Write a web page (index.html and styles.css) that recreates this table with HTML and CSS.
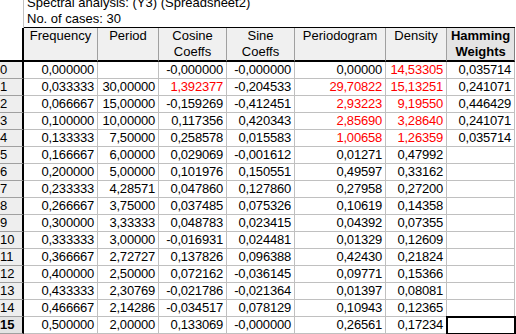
FILE: index.html
```html
<!DOCTYPE html>
<html lang="en">
<head>
    <meta charset="UTF-8">
    <title>Spectral analysis</title>
    <link rel="stylesheet" href="styles.css">
</head>
<body>
    <table class="sheet">
        <colgroup>
            <col class="c-row">
            <col class="c-freq">
            <col class="c-period">
            <col class="c-cos">
            <col class="c-sin">
            <col class="c-pgram">
            <col class="c-dens">
            <col class="c-ham">
        </colgroup>
        <tr class="title-row">
            <td class="corner"></td>
            <td class="title" colspan="7">Spectral analysis: (Y3) (Spreadsheet2)<br>No. of cases: 30</td>
        </tr>
        <tr class="head-row">
            <th class="corner"></th>
            <th>Frequency</th>
            <th>Period</th>
            <th>Cosine<br>Coeffs</th>
            <th>Sine<br>Coeffs</th>
            <th>Periodogram</th>
            <th>Density</th>
            <th class="active">Hamming<br>Weights</th>
        </tr>
        <tr><th class="rh">0</th><td>0,000000</td><td></td><td>-0,000000</td><td>-0,000000</td><td>0,00000</td><td class="red">14,53305</td><td>0,035714</td></tr>
        <tr><th class="rh">1</th><td>0,033333</td><td>30,00000</td><td class="red">1,392377</td><td>-0,204533</td><td class="red">29,70822</td><td class="red">15,13251</td><td>0,241071</td></tr>
        <tr><th class="rh">2</th><td>0,066667</td><td>15,00000</td><td>-0,159269</td><td>-0,412451</td><td class="red">2,93223</td><td class="red">9,19550</td><td>0,446429</td></tr>
        <tr><th class="rh">3</th><td>0,100000</td><td>10,00000</td><td>0,117356</td><td>0,420343</td><td class="red">2,85690</td><td class="red">3,28640</td><td>0,241071</td></tr>
        <tr><th class="rh">4</th><td>0,133333</td><td>7,50000</td><td>0,258578</td><td>0,015583</td><td class="red">1,00658</td><td class="red">1,26359</td><td>0,035714</td></tr>
        <tr><th class="rh">5</th><td>0,166667</td><td>6,00000</td><td>0,029069</td><td>-0,001612</td><td>0,01271</td><td>0,47992</td><td></td></tr>
        <tr><th class="rh">6</th><td>0,200000</td><td>5,00000</td><td>0,101976</td><td>0,150551</td><td>0,49597</td><td>0,33162</td><td></td></tr>
        <tr><th class="rh">7</th><td>0,233333</td><td>4,28571</td><td>0,047860</td><td>0,127860</td><td>0,27958</td><td>0,27200</td><td></td></tr>
        <tr><th class="rh">8</th><td>0,266667</td><td>3,75000</td><td>0,037485</td><td>0,075326</td><td>0,10619</td><td>0,14358</td><td></td></tr>
        <tr><th class="rh">9</th><td>0,300000</td><td>3,33333</td><td>0,048783</td><td>0,023415</td><td>0,04392</td><td>0,07355</td><td></td></tr>
        <tr><th class="rh">10</th><td>0,333333</td><td>3,00000</td><td>-0,016931</td><td>0,024481</td><td>0,01329</td><td>0,12609</td><td></td></tr>
        <tr><th class="rh">11</th><td>0,366667</td><td>2,72727</td><td>0,137826</td><td>0,096388</td><td>0,42430</td><td>0,21824</td><td></td></tr>
        <tr><th class="rh">12</th><td>0,400000</td><td>2,50000</td><td>0,072162</td><td>-0,036145</td><td>0,09771</td><td>0,15366</td><td></td></tr>
        <tr><th class="rh">13</th><td>0,433333</td><td>2,30769</td><td>-0,021786</td><td>-0,021364</td><td>0,01397</td><td>0,08081</td><td></td></tr>
        <tr><th class="rh">14</th><td>0,466667</td><td>2,14286</td><td>-0,034517</td><td>0,078129</td><td>0,10943</td><td>0,12365</td><td></td></tr>
        <tr><th class="rh active">15</th><td>0,500000</td><td>2,00000</td><td>0,133069</td><td>-0,000000</td><td>0,26561</td><td>0,17234</td><td class="current"></td></tr>
    </table>
</body>
</html>
```

FILE: styles.css
```css
body {
    margin: 0;
    background: #fff;
    font-family: "Liberation Sans", Arial, sans-serif;
    font-size: 13px;
    color: #000;
    overflow: hidden;
}
.sheet {
    table-layout: fixed;
    border-collapse: separate;
    border-spacing: 0;
    width: 515px;
    margin-top: -5px;
}
.c-row { width: 24px; }
.c-freq { width: 74px; }
.c-period { width: 61px; }
.c-cos { width: 68px; }
.c-sin { width: 68px; }
.c-pgram { width: 91px; }
.c-dens { width: 61px; }
.c-ham { width: 68px; }

.sheet td,
.sheet th {
    box-sizing: border-box;
    padding: 0;
    line-height: 16px;
    white-space: nowrap;
    overflow: hidden;
}
.sheet td {
    text-align: right;
    padding-right: 3px;
    letter-spacing: -0.2px;
    border-right: 1px solid #c0c0c0;
    border-bottom: 1px solid #c0c0c0;
}
.corner {
    background: #fff;
    border-right: 2px solid #000;
}
.title-row .title {
    text-align: left;
    letter-spacing: 0;
    padding: 0 0 0 3px;
    border-right: none;
    border-bottom: 1px solid #000;
}
.title-row .corner {
    border-bottom: none;
}
.head-row th {
    background: #f0f0f0;
    font-weight: normal;
    text-align: center;
    vertical-align: top;
    border-right: 1px solid #a0a0a0;
    border-bottom: 2px solid #000;
}
.head-row th.corner {
    background: #fff;
    border-right: 2px solid #000;
}
.head-row th.active {
    background: #e4e4e4;
    font-weight: bold;
    border-right: 1px solid #808080;
}
.rh {
    background: #eeeeee;
    font-weight: normal;
    text-align: left;
    padding-left: 3px;
    border-right: 2px solid #000;
    border-bottom: 1px solid #a0a0a0;
}
.rh.active {
    background: #e4e4e4;
    font-weight: bold;
}
.red {
    color: #ff0000;
}
.current {
    outline: 2px solid #000;
    outline-offset: -1px;
}
```
